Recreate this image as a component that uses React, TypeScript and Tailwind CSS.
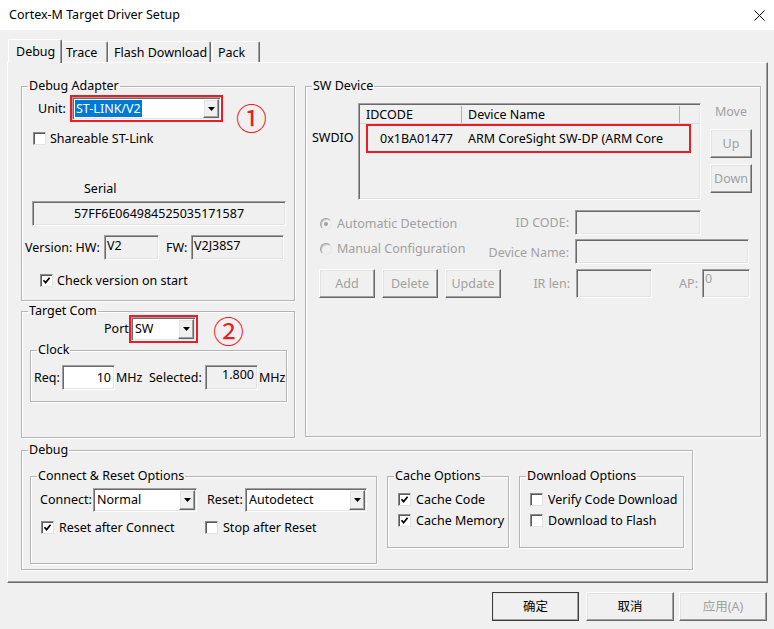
import React from "react";

const SUNKEN =
  "border border-t-[#a0a0a0] border-l-[#a0a0a0] border-r-white border-b-white shadow-[inset_1px_1px_0_#696969,inset_-1px_-1px_0_#e3e3e3] p-[1px]";
const RAISED =
  "border border-t-white border-l-white border-r-[#696969] border-b-[#696969] shadow-[inset_-1px_-1px_0_#a0a0a0,inset_1px_1px_0_#e3e3e3]";
const GROUP = "border border-[#b4b4b4] shadow-[inset_1px_1px_0_#ffffff,1px_1px_0_#ffffff]";
const RED = "border-2 border-[#ec1c24]";

function Check({ checked }: { checked?: boolean }) {
  return (
    <span className="w-[13px] h-[13px] shrink-0 bg-white border border-t-[#8a8a8a] border-l-[#8a8a8a] border-r-[#e3e3e3] border-b-[#e3e3e3] shadow-[inset_1px_1px_0_#5a5a5a] flex items-center justify-center">
      {checked && (
        <svg width="9" height="9" viewBox="0 0 9 9">
          <path d="M1.5 4.2 L3.6 6.6 L7.6 1.8" stroke="#000" strokeWidth="1.7" fill="none" />
        </svg>
      )}
    </span>
  );
}

function Radio({ checked }: { checked?: boolean }) {
  return (
    <span className="w-[12px] h-[12px] shrink-0 rounded-full bg-[#f0f0f0] border border-t-[#a0a0a0] border-l-[#a0a0a0] border-r-[#e8e8e8] border-b-[#e8e8e8] shadow-[inset_1px_1px_0_#c8c8c8] flex items-center justify-center">
      {checked && <span className="w-[4px] h-[4px] rounded-full bg-[#a0a0a0]" />}
    </span>
  );
}

function Arrow() {
  return (
    <svg width="7" height="4" viewBox="0 0 7 4">
      <path d="M0 0 H7 L3.5 4 Z" fill="#000" />
    </svg>
  );
}

function Combo({ cls, text, selected }: { cls: string; text: string; selected?: boolean }) {
  return (
    <div className={`flex bg-white ${SUNKEN} ${cls}`}>
      <div className="flex-1 flex items-center pl-[1px] overflow-hidden whitespace-nowrap">
        {selected ? <span className="bg-[#0078d7] text-white px-[1px] leading-[17px]">{text}</span> : <span className="pl-[1px]">{text}</span>}
      </div>
      <div className={`w-[16px] h-full bg-[#f0f0f0] flex items-center justify-center ${RAISED}`}>
        <Arrow />
      </div>
    </div>
  );
}

function Btn({ cls, children, disabled }: { cls: string; children: React.ReactNode; disabled?: boolean }) {
  return (
    <div className={`flex items-center justify-center bg-[#f0f0f0] ${RAISED} ${disabled ? "text-[#a0a0a0]" : "text-black"} ${cls}`}>
      {children}
    </div>
  );
}

export default function App() {
  return (
    <div className="w-[774px] h-[629px] bg-[#f0f0f0] flex flex-col overflow-hidden text-[12.5px] leading-[16px] text-black font-['Noto_Sans','Noto_Sans_CJK_SC',sans-serif]">
      {/* Title bar */}
      <div className="h-[30px] shrink-0 bg-white flex items-center justify-between pl-[9px] pr-[9px]">
        <span>Cortex-M Target Driver Setup</span>
        <svg width="11" height="11" viewBox="0 0 11 11">
          <path d="M0.5 0.5 L10.5 10.5 M10.5 0.5 L0.5 10.5" stroke="#000" strokeWidth="1" />
        </svg>
      </div>

      <div className="flex flex-col px-[7px] pt-[9px]">
        {/* Tabs */}
        <div className="flex items-end h-[23px] relative z-10">
          <div className="ml-[1px] w-[54px] h-[24px] -mb-[1px] bg-[#f0f0f0] border-l border-t border-r border-l-white border-t-white border-r-[#696969] shadow-[inset_-1px_0_0_#a0a0a0] rounded-t-[2px] pl-[7px] pt-[4px]">
            Debug
          </div>
          <div className="w-[46px] h-[21px] border-t border-r border-t-white border-r-[#696969] shadow-[inset_-1px_0_0_#a0a0a0] rounded-t-[2px] pl-[4px] pt-[3px]">
            Trace
          </div>
          <div className="w-[103px] h-[21px] border-l border-t border-r border-l-white border-t-white border-r-[#696969] shadow-[inset_-1px_0_0_#a0a0a0] rounded-t-[2px] pl-[5px] pt-[3px]">
            Flash Download
          </div>
          <div className="ml-[1px] w-[48px] h-[21px] border-l border-t border-r border-l-white border-t-white border-r-[#696969] shadow-[inset_-1px_0_0_#a0a0a0] rounded-t-[2px] pl-[5px] pt-[3px]">
            Pack
          </div>
        </div>

        {/* Tab panel */}
        <div className="w-[761px] h-[521px] border border-t-white border-l-white border-r-[#696969] border-b-[#696969] shadow-[inset_-1px_-1px_0_#a0a0a0] flex flex-col">
          <div className="flex items-start mt-[16px] ml-[13px]">
            {/* Left column */}
            <div className="flex flex-col w-[274px]">
              <fieldset className={`w-[274px] h-[222px] ${GROUP}`}>
                <legend className="ml-[6px] px-[1px] leading-[14px]">Debug Adapter</legend>
                <div className="flex items-start h-[27px] mt-[2px] ml-[16px]">
                  <span className="w-[32px] leading-[27px]">Unit:</span>
                  <div className={`w-[153px] h-[27px] ${RED} flex`}>
                    <Combo cls="w-full h-full" text="ST-LINK/V2" selected />
                  </div>
                  <span className="ml-[13px] mt-[6px] text-[#ec1c24] text-[31px] leading-[31px] font-['Noto_Sans_CJK_SC',sans-serif]">①</span>
                </div>
                <div className="flex items-center h-[13px] mt-[10px] ml-[11px] gap-[4px]">
                  <Check />
                  <span className="whitespace-nowrap">Shareable ST-Link</span>
                </div>
                <div className="mt-[36px] ml-[62px]">Serial</div>
                <div className={`mt-[4px] ml-[10px] w-[254px] h-[25px] bg-[#f0f0f0] flex items-center justify-center ${SUNKEN}`}>
                  57FF6E064984525035171587
                </div>
                <div className="flex items-center h-[25px] mt-[9px] ml-[3px]">
                  <span className="w-[79px] whitespace-nowrap">Version: HW:</span>
                  <div className={`w-[55px] h-[25px] bg-[#f0f0f0] pl-[2px] pt-[2px] ${SUNKEN}`}>V2</div>
                  <span className="ml-[7px] w-[25px]">FW:</span>
                  <div className={`w-[93px] h-[25px] bg-[#f0f0f0] pl-[2px] pt-[2px] ${SUNKEN}`}>V2J38S7</div>
                </div>
                <div className="flex items-center h-[13px] mt-[14px] ml-[18px] gap-[4px]">
                  <Check checked />
                  <span className="whitespace-nowrap">Check version on start</span>
                </div>
              </fieldset>

              <fieldset className={`mt-[3px] w-[274px] h-[134px] ${GROUP}`}>
                <legend className="ml-[6px] px-[1px] leading-[14px]">Target Com</legend>
                <div className="flex items-center h-[28px] -mt-[3px] ml-[82px]">
                  <span className="w-[25px]">Port</span>
                  <div className={`w-[69px] h-[28px] ${RED} flex`}>
                    <Combo cls="w-full h-full" text="SW" />
                  </div>
                  <span className="ml-[15px] text-[#ec1c24] text-[31px] leading-[31px] font-['Noto_Sans_CJK_SC',sans-serif]">②</span>
                </div>
                <fieldset className={`ml-[8px] w-[257px] h-[59px] ${GROUP}`}>
                  <legend className="ml-[6px] px-[1px] leading-[14px]">Clock</legend>
                  <div className="flex items-center h-[25px] mt-[8px] ml-[3px]">
                    <span className="w-[28px]">Req:</span>
                    <div className={`w-[53px] h-[25px] bg-white flex items-center justify-end pr-[3px] ${SUNKEN}`}>10</div>
                    <span className="ml-[1px] w-[33px]">MHz</span>
                    <span className="w-[56px] whitespace-nowrap">Selected:</span>
                    <div className={`w-[53px] h-[25px] bg-[#f0f0f0] flex justify-end pr-[3px] pt-[1px] ${SUNKEN}`}>1.800</div>
                    <span className="ml-[1px]">MHz</span>
                  </div>
                </fieldset>
              </fieldset>
            </div>

            {/* SW Device */}
            <fieldset className={`ml-[10px] w-[456px] h-[358px] ${GROUP}`}>
              <legend className="ml-[6px] px-[1px] leading-[14px]">SW Device</legend>
              <div className="flex items-start mt-[10px]">
                <span className="ml-[6px] w-[46px] mt-[27px]">SWDIO</span>
                <div className={`w-[343px] h-[97px] bg-[#f0f0f0] flex flex-col ${SUNKEN}`}>
                  <div className="flex h-[19px] border-b border-[#d8d8d8] leading-[18px] pt-[1px]">
                    <div className="w-[102px] pl-[6px] border-r border-[#b0b0b0]">IDCODE</div>
                    <div className="w-[218px] pl-[6px] border-r border-[#b0b0b0]">Device Name</div>
                    <div className="flex-1" />
                  </div>
                  <div className={`ml-[6px] w-[325px] h-[29px] ${RED} flex items-center whitespace-nowrap`}>
                    <span className="w-[100px] pl-[12px]">0x1BA01477</span>
                    <span className="w-[210px] overflow-hidden">ARM CoreSight SW-DP (ARM Core</span>
                  </div>
                </div>
                <div className="ml-[9px] w-[42px] flex flex-col">
                  <span className="mt-[1px] text-center text-[#a0a0a0]">Move</span>
                  <Btn cls="mt-[9px] w-[42px] h-[29px]" disabled>Up</Btn>
                  <Btn cls="mt-[6px] w-[42px] h-[29px]" disabled>Down</Btn>
                </div>
              </div>

              <div className="flex items-start mt-[10px] text-[#a0a0a0]">
                <div className="ml-[14px] w-[168px] flex flex-col">
                  <div className="flex items-center gap-[5px] mt-[6px] whitespace-nowrap">
                    <Radio checked />
                    <span>Automatic Detection</span>
                  </div>
                  <div className="flex items-center gap-[5px] mt-[9px] whitespace-nowrap">
                    <Radio />
                    <span>Manual Configuration</span>
                  </div>
                </div>
                <div className="grid grid-cols-[81px_auto] gap-x-[6px] gap-y-[4px]">
                  <span className="h-[25px] flex items-center justify-end whitespace-nowrap">ID CODE:</span>
                  <div className={`w-[126px] h-[25px] bg-[#f0f0f0] ${SUNKEN}`} />
                  <span className="h-[25px] flex items-center justify-end whitespace-nowrap pt-[2px]">Device Name:</span>
                  <div className={`w-[174px] h-[25px] bg-[#f0f0f0] ${SUNKEN}`} />
                </div>
              </div>

              <div className="flex items-center mt-[5px] ml-[13px] h-[29px] text-[#a0a0a0]">
                <Btn cls="w-[56px] h-[29px]" disabled>Add</Btn>
                <Btn cls="ml-[7px] w-[56px] h-[29px]" disabled>Delete</Btn>
                <Btn cls="ml-[7px] w-[56px] h-[29px]" disabled>Update</Btn>
                <span className="w-[69px] flex justify-end whitespace-nowrap">IR len:</span>
                <div className={`ml-[6px] w-[76px] h-[29px] bg-[#f0f0f0] ${SUNKEN}`} />
                <span className="w-[50px] flex justify-end pr-[4px]">AP:</span>
                <div className={`w-[48px] h-[29px] bg-[#f0f0f0] pl-[2px] ${SUNKEN}`}>0</div>
              </div>
            </fieldset>
          </div>

          {/* Debug group */}
          <fieldset className={`mt-[5px] ml-[13px] w-[672px] h-[127px] ${GROUP}`}>
            <legend className="ml-[6px] px-[1px] leading-[14px]">Debug</legend>
            <div className="flex items-start mt-[12px] ml-[8px]">
              <fieldset className={`w-[347px] h-[95px] ${GROUP}`}>
                <legend className="ml-[6px] px-[1px] leading-[14px]">Connect &amp; Reset Options</legend>
                <div className="flex items-center h-[24px] mt-[5px] ml-[9px]">
                  <span className="w-[53px]">Connect:</span>
                  <Combo cls="w-[104px] h-[24px]" text="Normal" />
                  <span className="ml-[10px] w-[38px]">Reset:</span>
                  <Combo cls="w-[122px] h-[24px]" text="Autodetect" />
                </div>
                <div className="flex items-center h-[13px] mt-[9px] ml-[10px]">
                  <div className="w-[164px] flex items-center gap-[5px]">
                    <Check checked />
                    <span className="whitespace-nowrap">Reset after Connect</span>
                  </div>
                  <div className="flex items-center gap-[5px]">
                    <Check />
                    <span className="whitespace-nowrap">Stop after Reset</span>
                  </div>
                </div>
              </fieldset>

              <fieldset className={`ml-[10px] w-[122px] h-[79px] ${GROUP}`}>
                <legend className="ml-[6px] px-[1px] leading-[14px]">Cache Options</legend>
                <div className="flex items-center h-[13px] mt-[10px] ml-[10px] gap-[5px]">
                  <Check checked />
                  <span className="whitespace-nowrap">Cache Code</span>
                </div>
                <div className="flex items-center h-[13px] mt-[8px] ml-[10px] gap-[5px]">
                  <Check checked />
                  <span className="whitespace-nowrap">Cache Memory</span>
                </div>
              </fieldset>

              <fieldset className={`ml-[10px] w-[165px] h-[79px] ${GROUP}`}>
                <legend className="ml-[6px] px-[1px] leading-[14px]">Download Options</legend>
                <div className="flex items-center h-[13px] mt-[10px] ml-[10px] gap-[5px]">
                  <Check />
                  <span className="whitespace-nowrap">Verify Code Download</span>
                </div>
                <div className="flex items-center h-[13px] mt-[8px] ml-[10px] gap-[5px]">
                  <Check />
                  <span className="whitespace-nowrap">Download to Flash</span>
                </div>
              </fieldset>
            </div>
          </fieldset>
        </div>

        {/* Bottom buttons */}
        <div className="flex mt-[9px] ml-[485px]">
          <Btn cls="w-[88px] h-[29px] outline outline-1 outline-[#3c3c3c] -outline-offset-1">确定</Btn>
          <Btn cls="ml-[7px] w-[89px] h-[29px]">取消</Btn>
          <Btn cls="ml-[5px] w-[89px] h-[29px]" disabled>应用(A)</Btn>
        </div>
      </div>
    </div>
  );
}
